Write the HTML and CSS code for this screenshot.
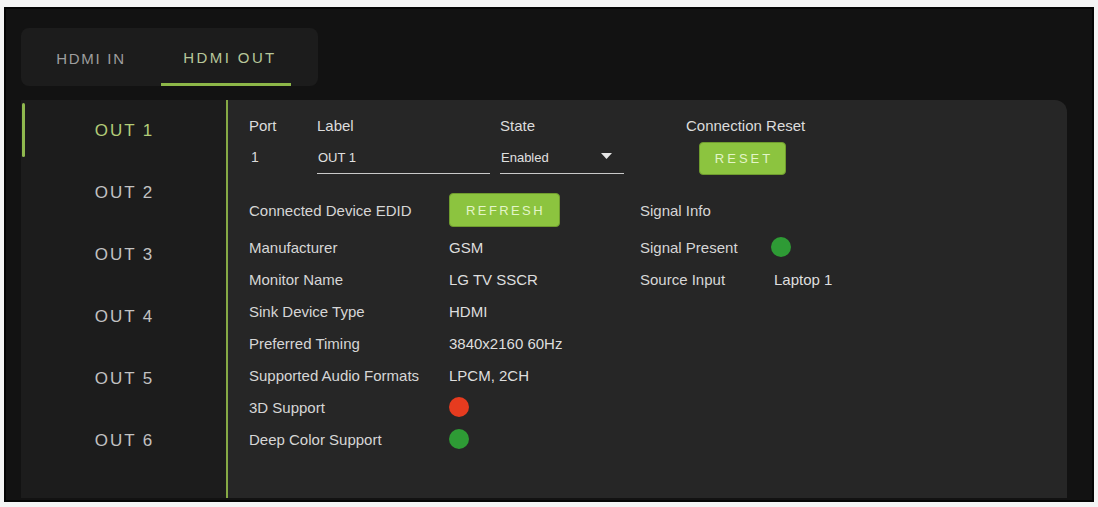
FILE: index.html
```html
<!DOCTYPE html>
<html lang="en">
<head>
<meta charset="utf-8">
<title>HDMI Output Settings</title>
<link rel="stylesheet" href="styles.css">
</head>
<body>
<div class="frame">
  <nav class="tabs">
    <span class="tab">HDMI IN</span>
    <span class="tab tab-active">HDMI OUT</span>
  </nav>

  <div class="main">
    <aside class="sidebar">
      <div class="out-item out-active">OUT 1</div>
      <div class="out-item">OUT 2</div>
      <div class="out-item">OUT 3</div>
      <div class="out-item">OUT 4</div>
      <div class="out-item">OUT 5</div>
      <div class="out-item">OUT 6</div>
    </aside>

    <section class="content">
      <div class="top-row">
        <div class="col col-port">
          <span class="head">Port</span>
          <div class="field plain"><span class="val-lg">1</span></div>
        </div>
        <div class="col col-label">
          <span class="head">Label</span>
          <div class="field"><span class="val-sm">OUT 1</span></div>
        </div>
        <div class="col col-state">
          <span class="head">State</span>
          <div class="field select">
            <span class="val-sm">Enabled</span>
            <svg class="caret" width="11" height="6" viewBox="0 0 11 6"><path d="M0 0 H11 L5.5 6 Z" fill="#e6e6e6"/></svg>
          </div>
        </div>
        <div class="col col-reset">
          <span class="head">Connection Reset</span>
          <button class="btn btn-reset">RESET</button>
        </div>
      </div>

      <div class="info-grid">
        <span class="key">Connected Device EDID</span>
        <span class="val"><button class="btn btn-refresh">REFRESH</button></span>
        <span class="key">Signal Info</span>
        <span class="val"></span>

        <span class="key">Manufacturer</span>
        <span class="val">GSM</span>
        <span class="key">Signal Present</span>
        <span class="val"><i class="dot dot-green dot-signal"></i></span>

        <span class="key">Monitor Name</span>
        <span class="val">LG TV SSCR</span>
        <span class="key">Source Input</span>
        <span class="val">Laptop 1</span>

        <span class="key">Sink Device Type</span>
        <span class="val span3">HDMI</span>

        <span class="key">Preferred Timing</span>
        <span class="val span3">3840x2160 60Hz</span>

        <span class="key">Supported Audio Formats</span>
        <span class="val span3">LPCM, 2CH</span>

        <span class="key">3D Support</span>
        <span class="val span3"><i class="dot dot-red"></i></span>

        <span class="key">Deep Color Support</span>
        <span class="val span3"><i class="dot dot-green"></i></span>
      </div>
    </section>
  </div>
</div>
</body>
</html>
```

FILE: styles.css
```css
* {
  box-sizing: border-box;
}

html, body {
  margin: 0;
  padding: 0;
  background: #f4f4f4;
}

body {
  font-family: "Liberation Sans", Arial, sans-serif;
  color: #d9d9d9;
}

/* Outer dark application frame */
.frame {
  margin: 7px 4px 0 4px;
  width: 1090px;
  height: 495px;
  background: #121212;
  border: 2px solid #050505;
  padding: 19px 0 2px 15px;
  display: flex;
  flex-direction: column;
}

/* HDMI IN / HDMI OUT tab strip */
.tabs {
  width: 297px;
  height: 58px;
  background: #1c1c1c;
  border-radius: 8px;
  display: flex;
  align-items: stretch;
  padding-left: 10px;
}

.tab {
  display: flex;
  align-items: center;
  justify-content: center;
  font-size: 15px;
  letter-spacing: 1.7px;
  color: #9e9e9e;
  width: 120px;
  padding-top: 2px;
}

.tab-active {
  width: 130px;
  margin-left: 10px;
  color: #b7c79a;
  border-bottom: 3px solid #8db748;
  padding-top: 3px;
  padding-left: 8px;
  letter-spacing: 2.4px;
}

/* Main panel: outputs list + details */
.main {
  margin-top: 14px;
  width: 1046px;
  flex: 1;
  display: flex;
}

.sidebar {
  width: 207px;
  background: #1c1c1c;
  border-right: 2px solid #86aa45;
  display: flex;
  flex-direction: column;
}

.out-item {
  position: relative;
  height: 62px;
  display: flex;
  align-items: center;
  justify-content: center;
  font-size: 17px;
  letter-spacing: 1.9px;
  color: #c2c2c2;
  padding-left: 2px;
}

.out-active {
  color: #b3cc78;
}

.out-active::before {
  content: "";
  position: absolute;
  left: 1px;
  top: 3px;
  width: 3px;
  height: 54px;
  background: #8fb84e;
  border-radius: 2px;
}

.content {
  flex: 1;
  background: #262626;
  border-top-right-radius: 12px;
  padding: 16px 0 0 21px;
}

/* Port / Label / State / Connection Reset */
.top-row {
  display: flex;
  align-items: flex-start;
}

.col {
  display: flex;
  flex-direction: column;
}

.head {
  font-size: 15px;
  line-height: 20px;
  color: #dcdcdc;
}

.field {
  margin-top: 5px;
  height: 33px;
  display: flex;
  align-items: center;
  border-bottom: 1px solid #c9c9c9;
}

.field.plain {
  border-bottom: 1px solid transparent;
}

.col-port {
  width: 68px;
}

.col-label {
  width: 173px;
  margin-right: 10px;
}

.col-state {
  width: 124px;
}

.select {
  justify-content: space-between;
  padding-right: 12px;
}

.caret {
  display: block;
  margin-top: -2px;
}

.col-reset {
  margin-left: 62px;
}

.val-lg {
  font-size: 14px;
  padding-left: 2px;
}

.val-sm {
  font-size: 13px;
  padding-left: 1px;
  color: #e0e0e0;
}

.btn {
  font-family: "Liberation Sans", Arial, sans-serif;
  background: #8cc43f;
  border: 1px solid #6f9c2e;
  border-radius: 4px;
  color: #e3f5c8;
  font-size: 13px;
  cursor: pointer;
  padding: 0;
}

.btn-reset {
  margin-top: 6px;
  margin-left: 13px;
  width: 87px;
  height: 33px;
  letter-spacing: 3px;
  padding-left: 3px;
}

.btn-refresh {
  width: 111px;
  height: 34px;
  letter-spacing: 2.4px;
  padding-left: 2px;
}

/* EDID and signal details */
.info-grid {
  margin-top: 14px;
  display: grid;
  grid-template-columns: 200px 191px 134px 1fr;
  grid-template-rows: 42px;
  grid-auto-rows: 32px;
  align-items: center;
  font-size: 15px;
}

.key {
  color: #d6d6d6;
}

.val {
  color: #dedede;
  display: flex;
  align-items: center;
}

.span3 {
  grid-column: span 3;
}

.dot {
  display: block;
  width: 20px;
  height: 20px;
  border-radius: 50%;
}

.dot-green {
  background: #2e9b35;
}

.dot-red {
  background: #e63b1f;
}

.dot-signal {
  margin-left: -3px;
}
```
